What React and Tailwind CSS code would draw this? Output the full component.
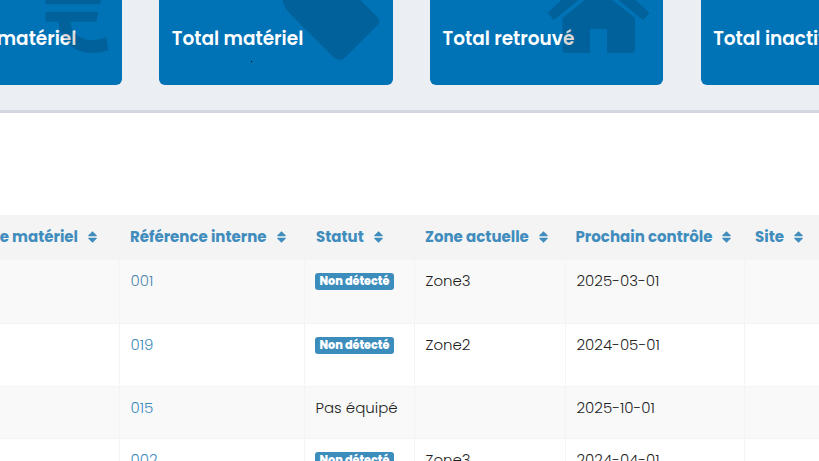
import React from "react";

function Card({ label, num, box, children, dot }) {
  return (
    <div className="relative w-[233.33px] h-[150px] shrink-0 rounded-[6px] bg-[#0073b7] overflow-hidden text-white">
      <div className="h-[66px] pt-[35px] pl-[12.5px] text-[30px] leading-[37px] font-semibold whitespace-nowrap overflow-hidden">{num}</div>
      <div className="pt-[24px] pl-[12.5px] text-[18.5px] leading-[28px] font-semibold whitespace-nowrap">{label}</div>
      {dot && <div className="absolute left-[92px] top-[126px] w-[1px] h-[1px] bg-black" />}
      {children && (
        <svg viewBox={box} className="absolute inset-0 w-full h-full opacity-15">
          {children}
        </svg>
      )}
    </div>
  );
}

function Sort() {
  return (
    <svg width="9" height="12" viewBox="0 0 9 12" className="inline-block ml-[10px] align-[-1px]">
      <path d="M4.5 0.3 L8.8 4.6 Q9 5.3 8.2 5.3 H0.8 Q0 5.3 0.2 4.6 Z M4.5 11.7 L0.2 7.4 Q0 6.7 0.8 6.7 H8.2 Q9 6.7 8.8 7.4 Z" fill="#3f8cbd" />
    </svg>
  );
}

function Badge() {
  return <span className="inline-block rounded-[3px] bg-[#3c8dbc] text-white text-[11.25px] leading-[17px] font-extrabold px-[5px] align-top mt-[3px] ml-[-1px] tracking-[-0.05px]">Non détecté</span>;
}

const headers = [
  ["Type de matériel", 200, "text-right pr-[22px]"],
  ["Référence interne", 185, "pl-[11px]"],
  ["Statut", 110, "pl-[12px]"],
  ["Zone actuelle", 151, "pl-[11px]"],
  ["Prochain contrôle", 179, "pl-[10.5px]"],
  ["Site", 75, "pl-[11px]"],
];

const rows = [
  { h: "h-[63px]", bg: "bg-[#f9f9f9]", ref: "001", refc: "text-[#4f86ad]", st: <Badge />, z: "Zone3", d: "2025-03-01" },
  { h: "h-[63px]", bg: "bg-white", ref: "019", refc: "text-[#3c8dbc]", st: <Badge />, z: "Zone2", d: "2024-05-01" },
  { h: "h-[52px]", bg: "bg-[#f9f9f9]", ref: "015", refc: "text-[#3c8dbc]", st: "Pas équipé", z: "", d: "2025-10-01" },
  { h: "h-[63px]", bg: "bg-white", ref: "002", refc: "text-[#3c8dbc]", st: <Badge />, z: "Zone3", d: "2024-04-01" },
];

export default function App() {
  return (
    <div className="w-[819px] h-[461px] overflow-hidden bg-white font-['Poppins','Inter','Liberation_Sans',sans-serif]">
      <div className="h-[113px] bg-[#ebeef3] border-b-[3px] border-[#d2d6de] overflow-hidden">
        <div className="flex gap-[37.33px] ml-[-111.33px] mt-[-65px]">
          <Card label="Valeur du matériel" num="120459" box="-111.33 -65 233.33 150">
            <path d="M45 -12 H102 L100 4.3 H58 V11.7 H98 L96 21.7 H70 C71 33 80 40 92 40 C97 40 102 39 106 37 L108 50 C104 52 98 53 92 53 C75 53 60 42 58 21.7 H47 Q45 21.7 45 19.7 V13.7 Q45 11.7 47 11.7 H58 V4.3 H45 Z" />
          </Card>
          <Card label="Total matériel" num="119" box="159.33 -65 233.33 150" dot>
            <path d="M283 -30 V0 Q284 7 290 13.3 L333 56.3 Q339.8 63.2 346 57 L378 25 Q382 21 377.5 16.8 L330 -30 Z" />
          </Card>
          <Card label="Total retrouvé" num="9" box="430 -65 233.33 150">
            <path d="M562.5 18 L598.5 -11 L635 18 V49 Q635 53 631 53 H607 V29 H590 V53 H566 Q562.5 53 562.5 49 Z" />
            <path d="M548.5 13 L598.5 -33 L648.5 13 L643 19 L598.5 -17 L554 19 Z" stroke="black" strokeWidth="1.5" strokeLinejoin="round" />
          </Card>
          <Card label="Total inactif" num="9" box="700.67 -65 233.33 150" />
        </div>
      </div>
      <table className="mt-[102px] ml-[-81px] table-fixed border-collapse w-[900px] text-[15px]">
        <colgroup>
          {headers.map((c, i) => <col key={i} style={{ width: c[1] }} />)}
        </colgroup>
        <thead>
          <tr className="h-[45px] bg-[#f4f4f4]">
            {headers.map((c, i) => (
              <th key={i} className={"font-bold text-[15px] text-[#3f8cbd] whitespace-nowrap " + (i === 0 ? "" : "text-left ") + c[2]}>
                {c[0]}<Sort />
              </th>
            ))}
          </tr>
        </thead>
        <tbody>
          {rows.map((r, i) => (
            <tr key={i} className={r.h + " " + r.bg + " border-b border-[#f4f4f4] align-top text-[#1f1f1f] font-light"}>
              <td className="border-r border-[#f4f4f4]" />
              <td className={"border-r border-[#f4f4f4] pl-[11px] pt-[10px] " + r.refc}>{r.ref}</td>
              <td className="border-r border-[#f4f4f4] pl-[11px] pt-[10px]">{r.st}</td>
              <td className="border-r border-[#f4f4f4] pl-[11px] pt-[10px]">{r.z}</td>
              <td className="border-r border-[#f4f4f4] pl-[11px] pt-[10px]">{r.d}</td>
              <td />
            </tr>
          ))}
        </tbody>
      </table>
    </div>
  );
}
